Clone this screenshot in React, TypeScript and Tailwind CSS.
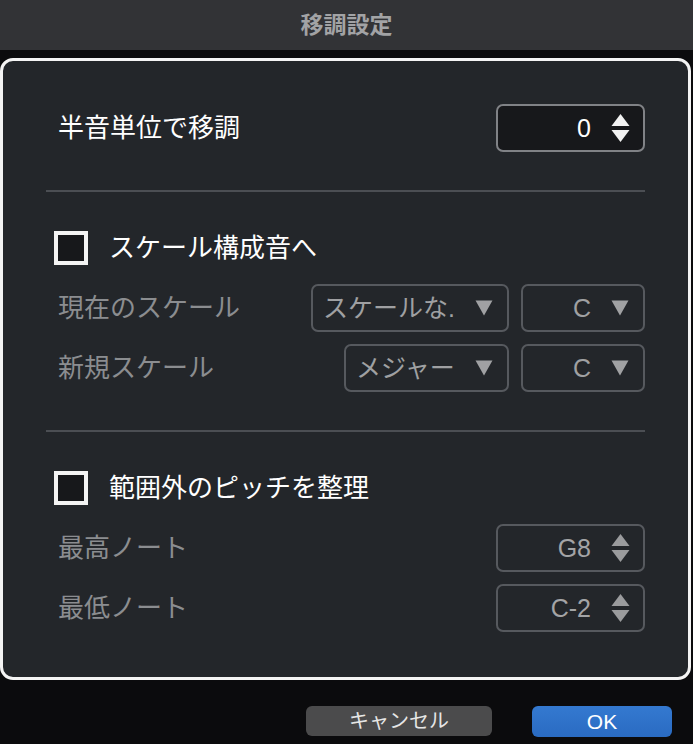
const font = "font-['Liberation_Sans','Noto_Sans_CJK_JP',sans-serif]"

function Spinner({ value, dim = false }: { value: string; dim?: boolean }) {
  const arrow = dim ? "#9a9b9d" : "#f2f2f2"
  return (
    <div
      className={`flex h-[48px] w-[149px] items-center justify-end rounded-[7px] border-2 pr-[13px] ${
        dim ? "border-[#56595e] bg-[#23262a]" : "border-[#808286] bg-[#17181b]"
      }`}
    >
      <span className={`text-[25px] leading-none ${dim ? "text-[#a3a4a6]" : "text-white"}`}>{value}</span>
      <svg width="19" height="30" viewBox="0 0 19 30" className="ml-[20px]">
        <path d="M9.5 1 L18.5 13 H0.5 Z" fill={arrow} />
        <path d="M9.5 29 L18.5 17 H0.5 Z" fill={arrow} />
      </svg>
    </div>
  )
}

function Dropdown({ label, width, center = false }: { label: string; width: string; center?: boolean }) {
  return (
    <div
      className={`flex h-[48px] ${width} items-center rounded-[7px] border-2 border-[#56595e] bg-[#23262a] pr-[14px] ${
        center ? "justify-end" : "justify-between pl-[10px]"
      }`}
    >
      <span className="text-[25px] leading-none text-[#9fa0a2]">{label}</span>
      <svg width="18" height="16" viewBox="0 0 18 16" className={center ? "ml-[20px]" : ""}>
        <path d="M0.5 0.5 H17.5 L9 15.5 Z" fill="#a0a1a3" />
      </svg>
    </div>
  )
}

function Checkbox() {
  return <div className="h-[34px] w-[34px] shrink-0 border-[4px] border-[#f4f4f4] bg-[#17181b]" />
}

export default function App() {
  return (
    <div className={`flex h-[744px] w-[693px] flex-col bg-[#0b0b0d] ${font}`}>
      {/* Title bar */}
      <div className="flex h-[50px] items-center justify-center bg-[#323336]">
        <span className="text-[23px] font-bold leading-none text-[#a2a3a5]">移調設定</span>
      </div>

      {/* Main panel */}
      <div className="mt-[8px] flex h-[622px] w-[691px] flex-col rounded-[13px] border-[3px] border-[#f4f4f4] bg-[#23262a] px-[43px] pt-[43px]">
        <div className="flex items-center justify-between">
          <span className="pl-[12px] text-[26px] leading-none text-white">半音単位で移調</span>
          <Spinner value="0" />
        </div>

        <div className="mt-[38px] h-[2px] bg-[#4b4e53]" />

        <div className="mt-[39px] flex h-[34px] items-center pl-[8px]">
          <Checkbox />
          <span className="ml-[21px] text-[26px] leading-none text-white">スケール構成音へ</span>
        </div>

        <div className="mt-[19px] flex items-center justify-between">
          <span className="pl-[12px] text-[26px] leading-none text-[#8b8d90]">現在のスケール</span>
          <div className="flex gap-[12px]">
            <Dropdown label="スケールな." width="w-[198px]" />
            <Dropdown label="C" width="w-[124px]" center />
          </div>
        </div>

        <div className="mt-[12px] flex items-center justify-between">
          <span className="pl-[12px] text-[26px] leading-none text-[#8b8d90]">新規スケール</span>
          <div className="flex gap-[12px]">
            <Dropdown label="メジャー" width="w-[165px]" />
            <Dropdown label="C" width="w-[124px]" center />
          </div>
        </div>

        <div className="mt-[38px] h-[2px] bg-[#4b4e53]" />

        <div className="mt-[39px] flex h-[34px] items-center pl-[8px]">
          <Checkbox />
          <span className="ml-[21px] text-[26px] leading-none text-white">範囲外のピッチを整理</span>
        </div>

        <div className="mt-[19px] flex items-center justify-between">
          <span className="pl-[12px] text-[26px] leading-none text-[#8b8d90]">最高ノート</span>
          <Spinner value="G8" dim />
        </div>

        <div className="mt-[12px] flex items-center justify-between">
          <span className="pl-[12px] text-[26px] leading-none text-[#8b8d90]">最低ノート</span>
          <Spinner value="C-2" dim />
        </div>
      </div>

      {/* Buttons */}
      <div className="mt-[26px] flex justify-end gap-[40px] pr-[21px]">
        <button className="h-[30px] w-[186px] rounded-[6px] bg-[#4b4b4c] text-[20px] leading-none text-[#e6e6e6]">
          キャンセル
        </button>
        <button className="h-[31px] w-[140px] rounded-[6px] bg-gradient-to-b from-[#3479d0] to-[#2a6bc2] text-[21px] leading-none text-white">
          OK
        </button>
      </div>
    </div>
  )
}
